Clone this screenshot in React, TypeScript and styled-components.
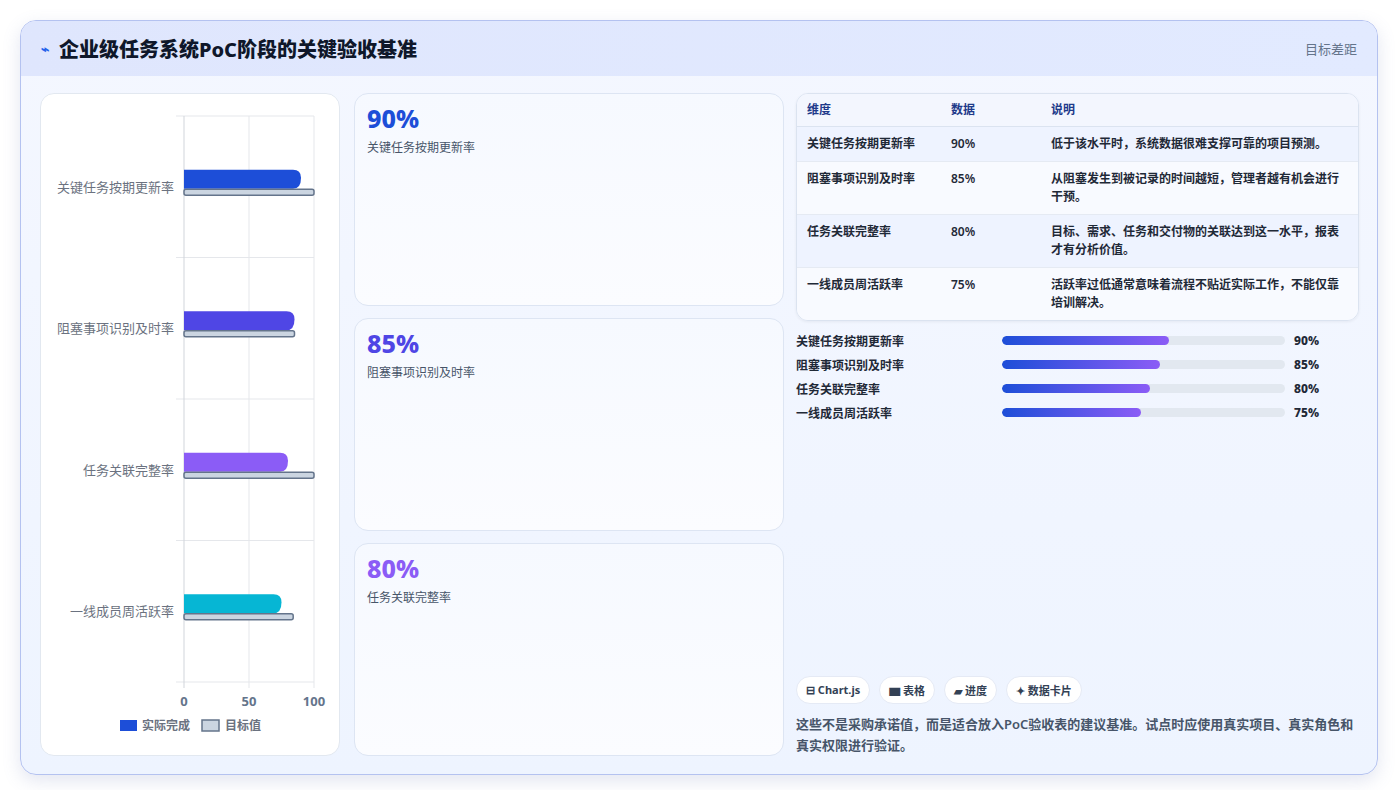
import styled, { createGlobalStyle } from 'styled-components';

const GlobalStyle = createGlobalStyle`
  body {
    margin: 0;
    background: #ffffff;
    font-family: "Noto Sans", "Noto Sans CJK SC", sans-serif;
  }
`;

const metrics = [
  { name: '关键任务按期更新率', value: 90, target: 100, color: '#1d4ed8', desc: '低于该水平时，系统数据很难支撑可靠的项目预测。' },
  { name: '阻塞事项识别及时率', value: 85, target: 85, color: '#4f46e5', desc: '从阻塞发生到被记录的时间越短，管理者越有机会进行干预。' },
  { name: '任务关联完整率', value: 80, target: 100, color: '#8b5cf6', desc: '目标、需求、任务和交付物的关联达到这一水平，报表才有分析价值。' },
  { name: '一线成员周活跃率', value: 75, target: 84, color: '#06b6d4', desc: '活跃率过低通常意味着流程不贴近实际工作，不能仅靠培训解决。' },
];

function BarChart() {
  const x0 = 143;
  const w = 130;
  const rowH = 141.5;
  const top = 22;
  return (
    <svg width="300" height="662" viewBox="0 0 300 662">
      {[0, 1, 2, 3, 4].map(i => (
        <line key={i} x1={x0 - 8} y1={top + i * rowH} x2={x0 + w} y2={top + i * rowH} stroke="#e5e7eb" />
      ))}
      {[0, 50, 100].map(v => (
        <line key={v} x1={x0 + (w * v) / 100} y1={top} x2={x0 + (w * v) / 100} y2={top + 4 * rowH + 6} stroke={v === 0 ? '#d1d5db' : '#e5e7eb'} />
      ))}
      {metrics.map((m, i) => {
        const cy = top + i * rowH + rowH / 2;
        const aw = (w * m.value) / 100;
        const tw = (w * m.target) / 100;
        return (
          <g key={m.name}>
            <text x={x0 - 10} y={cy + 5} textAnchor="end" fontSize="13" fill="#6b7280">{m.name}</text>
            <path d={`M${x0} ${cy - 17} H${x0 + aw - 8} Q${x0 + aw} ${cy - 17} ${x0 + aw} ${cy - 9} Q${x0 + aw} ${cy + 2} ${x0 + aw - 8} ${cy + 2} H${x0} Z`} fill={m.color} />
            <rect x={x0} y={cy + 2.5} width={tw} height={6} rx="2" fill="#cbd5e1" stroke="#64748b" strokeWidth="1.5" />
          </g>
        );
      })}
      {[0, 50, 100].map(v => (
        <text key={v} x={x0 + (w * v) / 100} y={top + 4 * rowH + 24} textAnchor="middle" fontSize="13" fontWeight="bold" fill="#64748b">{v}</text>
      ))}
      <rect x="79" y="626" width="17" height="11" fill="#1d4ed8" />
      <text x="101" y="636" fontSize="12" fontWeight="bold" fill="#6b7280">实际完成</text>
      <rect x="161" y="626" width="17" height="11" fill="#cbd5e1" stroke="#64748b" strokeWidth="1.5" />
      <text x="184" y="636" fontSize="12" fontWeight="bold" fill="#6b7280">目标值</text>
    </svg>
  );
}

export default function App() {
  return (
    <>
      <GlobalStyle />
      <Page>
        <Frame>
          <Header>
            <Title><Bolt>⌁</Bolt>企业级任务系统PoC阶段的关键验收基准</Title>
            <HeaderTag>目标差距</HeaderTag>
          </Header>
          <Body>
            <ChartCard><BarChart /></ChartCard>
            <StatColumn>
              {metrics.slice(0, 3).map(m => (
                <StatCard key={m.name}>
                  <StatValue color={m.color}>{m.value}%</StatValue>
                  <StatLabel>{m.name}</StatLabel>
                </StatCard>
              ))}
            </StatColumn>
            <RightColumn>
              <Table>
                <colgroup>
                  <col style={{ width: 144 }} />
                  <col style={{ width: 100 }} />
                  <col />
                </colgroup>
                <thead>
                  <tr>
                    <Th>维度</Th>
                    <Th>数据</Th>
                    <Th>说明</Th>
                  </tr>
                </thead>
                <tbody>
                  {metrics.map((m, i) => (
                    <Tr key={m.name} odd={i % 2 === 0}>
                      <Td>{m.name}</Td>
                      <Td>{m.value}%</Td>
                      <Td>{m.desc}</Td>
                    </Tr>
                  ))}
                </tbody>
              </Table>
              <Progress>
                {metrics.map(m => (
                  <ProgressRow key={m.name}>
                    <ProgressLabel>{m.name}</ProgressLabel>
                    <Track><Fill style={{ width: `${m.value * 0.655}%` }} /></Track>
                    <ProgressValue>{m.value}%</ProgressValue>
                  </ProgressRow>
                ))}
              </Progress>
              <Spacer />
              <Pills>
                <Pill>⊟ Chart.js</Pill>
                <Pill>▆ 表格</Pill>
                <Pill>▰ 进度</Pill>
                <Pill>✦ 数据卡片</Pill>
              </Pills>
              <Note>这些不是采购承诺值，而是适合放入PoC验收表的建议基准。试点时应使用真实项目、真实角色和真实权限进行验证。</Note>
            </RightColumn>
          </Body>
        </Frame>
      </Page>
    </>
  );
}

const Page = styled.div`
  width: 1399px;
  height: 790px;
  padding: 20px 21px 17px 20px;
  box-sizing: border-box;
`;

const Frame = styled.div`
  height: 100%;
  border: 1px solid #b4c2f0;
  border-radius: 16px;
  background: linear-gradient(180deg, #f4f7ff 0%, #eef4ff 100%);
  box-shadow: 0 6px 18px rgba(100, 116, 180, 0.18);
  overflow: hidden;
  display: flex;
  flex-direction: column;
`;

const Header = styled.div`
  height: 55px;
  flex-shrink: 0;
  background: linear-gradient(90deg, #dfe6fd 0%, #e2eaff 100%);
  display: flex;
  align-items: center;
  justify-content: space-between;
  padding: 0 20px;
`;

const Title = styled.h1`
  margin: 0;
  font-size: 20px;
  font-weight: 800;
  color: #0f172a;
  display: flex;
  align-items: center;
  gap: 10px;
`;

const Bolt = styled.span`
  color: #2563eb;
  font-size: 14px;
`;

const HeaderTag = styled.span`
  font-size: 13px;
  color: #64748b;
`;

const Body = styled.div`
  flex: 1;
  display: grid;
  grid-template-columns: 300px 430px 1fr;
  gap: 14px;
  padding: 17px 18px 18px 19px;
  min-height: 0;
`;

const ChartCard = styled.div`
  background: #ffffff;
  border: 1px solid #e2e8f0;
  border-radius: 14px;
  overflow: hidden;
`;

const StatColumn = styled.div`
  display: grid;
  grid-template-rows: repeat(3, 1fr);
  gap: 12px;
`;

const StatCard = styled.div`
  background: linear-gradient(180deg, #f6f9ff 0%, #fbfcff 100%);
  border: 1px solid #dde5f3;
  border-radius: 14px;
  padding: 11px 12px;
`;

const StatValue = styled.div<{ color: string }>`
  font-size: 25px;
  font-weight: 800;
  color: ${p => p.color};
  line-height: 1.1;
`;

const StatLabel = styled.div`
  font-size: 12px;
  color: #475569;
  margin-top: 5px;
`;

const RightColumn = styled.div`
  display: flex;
  flex-direction: column;
  margin-left: -2px;
`;

const Table = styled.table`
  width: 100%;
  table-layout: fixed;
  border-collapse: separate;
  border-spacing: 0;
  border: 1px solid #dbe3f0;
  border-radius: 12px;
  overflow: hidden;
  font-size: 12px;
  box-shadow: 0 1px 3px rgba(15, 23, 42, 0.06);
`;

const Th = styled.th`
  text-align: left;
  font-weight: 700;
  color: #1e3a8a;
  background: #f3f6fe;
  padding: 7px 10px 7px;
  line-height: 1.5;
  border-bottom: 1px solid #dbe3f0;
`;

const Tr = styled.tr<{ odd: boolean }>`
  background: ${p => (p.odd ? '#eef3ff' : '#f8faff')};
`;

const Td = styled.td`
  padding: 8px 10px 8px;
  color: #1f2937;
  font-weight: 600;
  vertical-align: top;
  line-height: 1.5;
  border-top: 1px solid #e5eaf3;
  tr:first-child & {
    border-top: none;
  }
`;

const Progress = styled.div`
  display: flex;
  flex-direction: column;
  gap: 5px;
  margin-top: 10px;
`;

const ProgressRow = styled.div`
  display: grid;
  grid-template-columns: 206px 283px 1fr;
  align-items: center;
  height: 19px;
  font-size: 12px;
  font-weight: 600;
`;

const ProgressLabel = styled.span`
  color: #1f2937;
`;

const Track = styled.div`
  height: 9px;
  border-radius: 5px;
  background: #e2e8f0;
  overflow: hidden;
`;

const Fill = styled.div`
  height: 100%;
  border-radius: 5px;
  background: linear-gradient(90deg, #1d4ed8, #8b5cf6);
`;

const ProgressValue = styled.span`
  padding-left: 9px;
  color: #1f2937;
  font-weight: 800;
`;

const Spacer = styled.div`
  flex: 1;
`;

const Pills = styled.div`
  display: flex;
  gap: 9px;
`;

const Pill = styled.span`
  background: #ffffff;
  border: 1px solid #e5eaf5;
  border-radius: 14px;
  padding: 5px 9px;
  font-size: 11px;
  font-weight: 700;
  color: #334155;
`;

const Note = styled.p`
  margin: 10px 0 0;
  font-size: 13px;
  line-height: 1.6;
  font-weight: 600;
  color: #475569;
`;
